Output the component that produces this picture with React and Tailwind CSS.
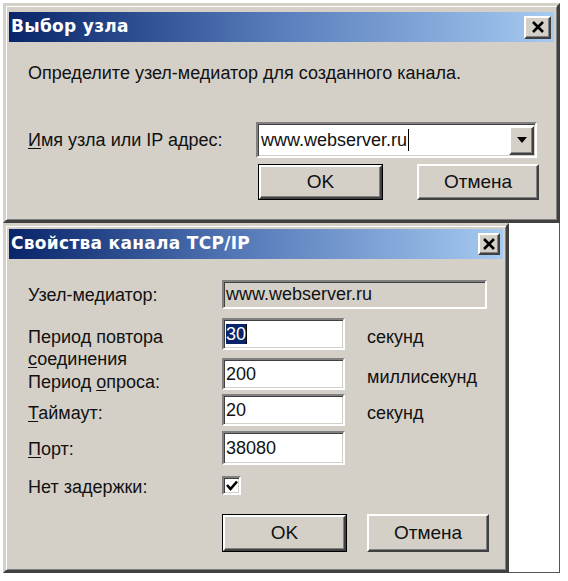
import React from 'react';

const raised =
  'border-2 border-t-white border-l-white border-r-[#404040] border-b-[#404040] shadow-[inset_-1px_-1px_0_#808080]';
const sunken =
  'border-2 border-t-[#808080] border-l-[#808080] border-r-white border-b-white shadow-[inset_1px_1px_0_#404040,inset_-1px_-1px_0_#d4d0c8]';

const CloseButton = ({ className }) => (
  <div className={`flex items-center justify-center bg-[#d4d0c8] ${raised} ${className}`}>
    <svg width="14" height="12" viewBox="0 0 14 12">
      <path d="M2 1 L12 11 M12 1 L2 11" stroke="#000" strokeWidth="2.6" />
    </svg>
  </div>
);

const TitleBar = ({ title, closeClass }) => (
  <div className="flex items-center justify-between h-[30px] pl-[2px] pr-[3px] bg-gradient-to-r from-[#0a246a] via-[#5a7ebc] to-[#a6caf0]">
    <span className="text-white font-bold text-[17px] tracking-[0.3px] font-['DejaVu_Sans',Verdana,sans-serif]">
      {title}
    </span>
    <CloseButton className={closeClass} />
  </div>
);

const Button = ({ children, isDefault, className }) => (
  <div className={`${isDefault ? 'border border-black' : ''} ${className}`}>
    <div className={`h-full flex items-center justify-center bg-[#d4d0c8] ${raised} text-[19px]`}>
      {children}
    </div>
  </div>
);

const Field = ({ children, className, readOnly }) => (
  <div
    className={`${sunken} ${readOnly ? 'bg-[#d4d0c8]' : 'bg-white'} flex items-center pl-[2px] text-[18px] ${className}`}
  >
    {children}
  </div>
);

const Row = ({ label, unit, children, className, labelClass = '' }) => (
  <div className={`flex ${className}`}>
    <div className={`w-[194px] text-[18px] leading-[22px] ${labelClass}`}>{label}</div>
    {children}
    {unit && <div className="ml-[22px] text-[18px] leading-[22px] mt-[8px]">{unit}</div>}
  </div>
);

export default function App() {
  return (
    <div className="w-[568px] h-[581px] bg-white pl-[3px] pt-[3px] text-[#111] font-['Liberation_Sans',Arial,sans-serif]">
      <div className="w-[557px]">
        {/* Выбор узла */}
        <div className="h-[220px] bg-[#d4d0c8] border-[3px] border-t-[#d4d0c8] border-l-[#d4d0c8] border-r-[#404040] border-b-[#404040] shadow-[inset_1px_1px_0_#fff,inset_-1px_-1px_0_#808080] px-[3px] pt-[6px]">
          <TitleBar title="Выбор узла" closeClass="w-[27px] h-[23px]" />
          <div className="pl-[19px] pt-[20px]">
            <p className="text-[18px] leading-[22px]">Определите узел-медиатор для созданного канала.</p>
            <div className="flex items-center mt-[38px]">
              <div className="w-[228px] text-[18px]">
                <u className="underline-offset-2">И</u>мя узла или IP адрес:
              </div>
              <div className={`${sunken} bg-white w-[281px] h-[36px] flex items-center justify-between pl-[3px] pr-[1px]`}>
                <div className="flex items-center text-[18px]">
                  www.webserver.ru
                  <span className="inline-block w-[1px] h-[22px] bg-black ml-[1px]" />
                </div>
                <div className={`w-[25px] h-[29px] bg-[#d4d0c8] ${raised} flex items-center justify-center`}>
                  <svg width="10" height="6" viewBox="0 0 10 6">
                    <path d="M0 0 H10 L5 6 Z" fill="#000" />
                  </svg>
                </div>
              </div>
            </div>
            <div className="flex mt-[6px] ml-[230px]">
              <Button isDefault className="w-[125px] h-[36px]">OK</Button>
              <Button className="w-[122px] h-[36px] ml-[34px]">Отмена</Button>
            </div>
          </div>
        </div>

        <div className="flex h-[350px]">
          {/* Свойства канала TCP/IP */}
          <div className="w-[506px] h-full bg-[#d4d0c8] border-[3px] border-t-[#d4d0c8] border-l-[#d4d0c8] border-r-[#404040] border-b-[#404040] shadow-[inset_1px_1px_0_#fff,inset_-1px_-1px_0_#808080] px-[3px] pt-[3px]">
            <TitleBar title="Свойства канала TCP/IP" closeClass="w-[22px] h-[22px]" />
            <div className="pl-[19px] pt-[21px]">
              <Row label="Узел-медиатор:" className="h-[29px] items-center">
                <Field readOnly className="w-[265px] h-[29px]">www.webserver.ru</Field>
              </Row>
              <Row
                label={
                  <>
                    Период повтора
                    <br />
                    <u className="underline-offset-2">с</u>оединения
                  </>
                }
                unit="секунд"
                className="h-[32px] mt-[9px]"
                labelClass="mt-[8px]"
              >
                <Field className="w-[123px] h-[32px]">
                  <span className="bg-[#0a246a] text-white leading-[20px]">30</span>
                  <span className="inline-block w-[1px] h-[20px] bg-black" />
                </Field>
              </Row>
              <Row
                label={
                  <>
                    Период <u className="underline-offset-2">о</u>проса:
                  </>
                }
                unit="миллисекунд"
                className="h-[32px] mt-[8px]"
                labelClass="mt-[13px]"
              >
                <Field className="w-[123px] h-[32px]">200</Field>
              </Row>
              <Row
                label={
                  <>
                    <u className="underline-offset-2">Т</u>аймаут:
                  </>
                }
                unit="секунд"
                className="h-[32px] mt-[4px]"
                labelClass="mt-[8px]"
              >
                <Field className="w-[123px] h-[32px]">20</Field>
              </Row>
              <Row
                label={
                  <>
                    <u className="underline-offset-2">П</u>орт:
                  </>
                }
                className="h-[34px] mt-[5px]"
                labelClass="mt-[7px]"
              >
                <Field className="w-[123px] h-[34px]">38080</Field>
              </Row>
              <Row label="Нет задержки:" className="h-[20px] mt-[10px] items-center" labelClass="mt-[4px]">
                <div className={`${sunken} bg-white w-[19px] h-[19px] flex items-center justify-center`}>
                  <svg width="12" height="11" viewBox="0 0 12 11">
                    <path d="M1 5 L4.5 9 L11 1.5" stroke="#000" strokeWidth="2.6" fill="none" />
                  </svg>
                </div>
              </Row>
              <div className="flex mt-[19px] ml-[194px]">
                <Button isDefault className="w-[125px] h-[38px]">OK</Button>
                <Button className="w-[122px] h-[38px] ml-[20px]">Отмена</Button>
              </div>
            </div>
          </div>
          <div className="flex-1 bg-white border-r border-b border-[#555]" />
        </div>
      </div>
    </div>
  );
}
